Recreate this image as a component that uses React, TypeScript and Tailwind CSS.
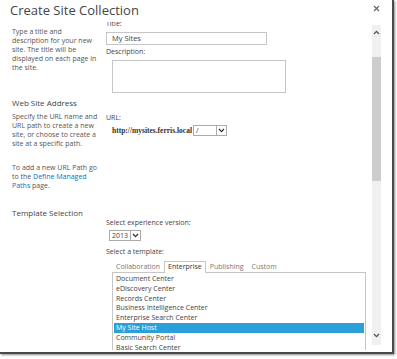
import { ReactNode } from 'react';

const templates = [
  'Document Center',
  'eDiscovery Center',
  'Records Center',
  'Business Intelligence Center',
  'Enterprise Search Center',
  'My Site Host',
  'Community Portal',
  'Basic Search Center',
  'Visio Process Repository',
];

function Chevron({ down = true, className = '' }: { down?: boolean; className?: string }) {
  return (
    <svg width="7" height="5" viewBox="0 0 7 5" className={className}>
      <path
        d={down ? 'M1 1 L3.5 3.6 L6 1' : 'M1 4 L3.5 1.4 L6 4'}
        fill="none"
        stroke="currentColor"
        strokeWidth="1.3"
      />
    </svg>
  );
}

function Select({ value, width }: { value: string; width: string }) {
  return (
    <div className={`flex h-[11px] border border-[#ababab] bg-white ${width}`}>
      <span className="flex-1 pl-[2px] text-[7px] leading-[9px] text-[#444]">{value}</span>
      <span className="flex w-[10px] items-center justify-center border-l border-[#ababab] text-[#333]">
        <Chevron />
      </span>
    </div>
  );
}

function Desc({ children }: { children: ReactNode }) {
  return <div className="whitespace-nowrap text-[7px] leading-[9px] text-[#555]">{children}</div>;
}

export default function App() {
  return (
    <div className="h-[359px] w-[397px] overflow-hidden bg-white font-['Open_Sans',sans-serif]">
      <div className="flex h-[354px] w-[394px] flex-col border-b-[2px] border-r-[2px] border-[#4a4a4a] bg-white shadow-[1px_1px_2px_rgba(0,0,0,0.45)]">
        <div className="flex h-[22px] items-start justify-between">
          <div className="pl-[10px] pt-[2px] text-[13px] leading-[16px] text-[#444]">Create Site Collection</div>
          <svg width="7" height="7" viewBox="0 0 7 7" className="mr-[12px] mt-[5px] text-[#666]">
            <path d="M1 1 L6 6 M6 1 L1 6" stroke="currentColor" strokeWidth="1.1" />
          </svg>
        </div>

        <div className="flex flex-1">
          {/* scrolled content */}
          <div className="h-[328px] flex-1 overflow-hidden">
            <div className="-mt-[4px]">
              {/* Title / description */}
              <div className="flex">
                <div className="w-[106px] pl-[12px] pt-[9px]">
                  <Desc>
                    Type a title and
                    <br />
                    description for your new
                    <br />
                    site. The title will be
                    <br />
                    displayed on each page in
                    <br />
                    the site.
                  </Desc>
                </div>
                <div className="pt-[1px]">
                  <div className="text-[7px] leading-[9px] text-[#444]">Title:</div>
                  <div className="mt-[4px] h-[13px] w-[161px] border border-[#c6c6c6] pl-[5px] text-[7.5px] leading-[11px] text-[#444]">
                    My Sites
                  </div>
                  <div className="mt-[2px] text-[7px] leading-[9px] text-[#444]">Description:</div>
                  <div className="ml-[6px] mt-[4px] h-[33px] w-[174px] border border-[#c6c6c6]" />
                </div>
              </div>

              {/* Web site address */}
              <div className="mt-[5px] flex">
                <div className="w-[106px] pl-[12px]">
                  <div className="text-[8px] leading-[10px] text-[#444]">Web Site Address</div>
                  <div className="mt-[4px]">
                    <Desc>
                      Specify the URL name and
                      <br />
                      URL path to create a new
                      <br />
                      site, or choose to create a
                      <br />
                      site at a specific path.
                    </Desc>
                  </div>
                  <div className="mt-[15px]">
                    <Desc>
                      To add a new URL Path go
                      <br />
                      to the <span className="text-[#0072c6]">Define Managed</span>
                      <br />
                      <span className="text-[#0072c6]">Paths</span> page.
                    </Desc>
                  </div>
                </div>
                <div className="pt-[15px]">
                  <div className="text-[7px] leading-[9px] text-[#444]">URL:</div>
                  <div className="ml-[6px] mt-[3px] flex items-center gap-[1px]">
                    <span className="font-['Liberation_Serif',serif] text-[7.5px] font-bold leading-[11px] text-[#333]">
                      http://mysites.ferris.local
                    </span>
                    <Select value="/" width="w-[34px]" />
                  </div>
                </div>
              </div>

              {/* Template selection */}
              <div className="mt-[18px] flex">
                <div className="w-[106px] pl-[12px]">
                  <div className="text-[8px] leading-[10px] text-[#444]">Template Selection</div>
                </div>
                <div className="pt-[10px]">
                  <div className="text-[7px] leading-[9px] text-[#444]">Select experience version:</div>
                  <div className="ml-[3px] mt-[3px]">
                    <Select value="2013" width="w-[32px]" />
                  </div>
                  <div className="mt-[6px] text-[7px] leading-[9px] text-[#444]">Select a template:</div>
                  <div className="ml-[6px] mt-[5px] flex h-[11px] items-end text-[7px] leading-[10px] text-[#777]">
                    <span className="px-[4px]">Collaboration</span>
                    <span className="relative -mb-px h-[12px] border border-b-0 border-[#c6c6c6] bg-white px-[3px] text-[#333]">
                      Enterprise
                    </span>
                    <span className="px-[4px]">Publishing</span>
                    <span className="px-[4px]">Custom</span>
                  </div>
                  <div className="ml-[6px] w-[254px] border border-[#c6c6c6] px-px pt-px">
                    {templates.map((t, i) => (
                      <div
                        key={t}
                        className={`h-[9.8px] pl-[2px] text-[7px] leading-[9.8px] ${
                          i === 5 ? 'bg-[#2a9fd8] text-white' : 'text-[#444]'
                        }`}
                      >
                        {t}
                      </div>
                    ))}
                  </div>
                </div>
              </div>
            </div>
          </div>

          {/* scrollbar */}
          <div className="mr-[11px] mt-[3px] flex h-[320px] w-[9px] flex-col items-center bg-[#f0f0f0] text-[#555]">
            <Chevron down={false} className="mt-[5px]" />
            <div className="mt-[22px] h-[124px] w-full bg-[#cdcdcd]" />
            <div className="flex-1" />
            <Chevron className="mb-[7px]" />
          </div>
        </div>
      </div>
    </div>
  );
}
